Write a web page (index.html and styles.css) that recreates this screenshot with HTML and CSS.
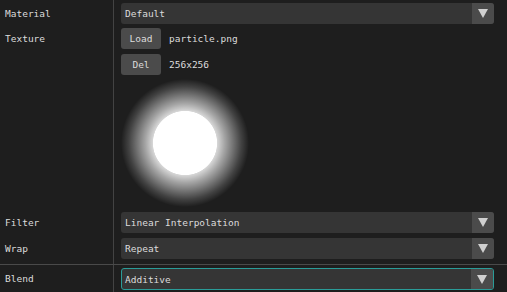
FILE: index.html
```html
<!DOCTYPE html>
<html>
<head>
<meta charset="utf-8">
<link rel="stylesheet" href="styles.css">
</head>
<body>
<div class="props">
  <div class="row row-material">
    <div class="label">Material</div>
    <div class="value">
      <div class="combo"><span class="combo-text">Default</span><span class="arrow"><span class="tri"></span></span></div>
    </div>
  </div>
  <div class="row row-texture">
    <div class="label">Texture</div>
    <div class="value">
      <div class="btn-line"><span class="btn">Load</span><span class="info">particle.png</span></div>
      <div class="btn-line btn-line-del"><span class="btn">Del</span><span class="info">256x256</span></div>
      <div class="preview"><div class="glow"></div></div>
    </div>
  </div>
  <div class="row row-gap5">
    <div class="label">Filter</div>
    <div class="value">
      <div class="combo"><span class="combo-text">Linear Interpolation</span><span class="arrow"><span class="tri"></span></span></div>
    </div>
  </div>
  <div class="row row-gap5">
    <div class="label">Wrap</div>
    <div class="value">
      <div class="combo"><span class="combo-text">Repeat</span><span class="arrow"><span class="tri"></span></span></div>
    </div>
  </div>
  <div class="sep"></div>
  <div class="row row-blend">
    <div class="label">Blend</div>
    <div class="value">
      <div class="combo combo-active"><span class="combo-text">Additive</span><span class="arrow"><span class="tri"></span></span></div>
    </div>
  </div>
</div>
</body>
</html>
```
FILE: styles.css
```css
html, body {
  margin: 0;
  padding: 0;
  background: #1e1e1e;
}
body {
  width: 507px;
  height: 292px;
  overflow: hidden;
  font-family: "DejaVu Sans Mono", monospace;
  font-size: 9.5px;
  color: #dcdcdc;
}
.props {
  height: 292px;
  background: linear-gradient(#434343, #434343) 113px 0 / 1px 100% no-repeat;
}
.row {
  display: flex;
  align-items: flex-start;
}
.label {
  width: 113px;
  height: 21px;
  flex: none;
  box-sizing: border-box;
  padding-left: 5px;
  line-height: 22px;
}
.value {
  flex: 1;
  padding-left: 8px;
  padding-right: 13px;
  min-width: 0;
}
.row-material { padding-top: 3px; }
.row-texture { padding-top: 4px; }
.row-gap5 { padding-top: 5px; }
.row-blend { padding-top: 3px; }

.combo {
  display: flex;
  height: 21px;
  background: #353535;
  border-radius: 3px;
  overflow: hidden;
  box-sizing: border-box;
}
.combo-active {
  height: 22px;
  border: 1px solid #2a9c98;
}
.combo-text {
  flex: 1;
  padding-left: 4px;
  line-height: 22px;
}
.combo-active .combo-text {
  padding-left: 3px;
  line-height: 21px;
}
.arrow {
  width: 22px;
  flex: none;
  background: #4b4b4b;
  display: flex;
  align-items: center;
  justify-content: center;
}
.tri {
  width: 0;
  height: 0;
  border-left: 5px solid transparent;
  border-right: 5px solid transparent;
  border-top: 9px solid #d0d0d0;
}
.btn-line {
  display: flex;
  align-items: center;
  gap: 8px;
  height: 21px;
}
.btn-line-del {
  margin-top: 5px;
}
.btn {
  width: 40px;
  height: 21px;
  line-height: 22px;
  text-align: center;
  background: #4b4b4b;
  border-radius: 3px;
}
.info {
  line-height: 22px;
}
.preview {
  margin-top: 4px;
  width: 128px;
  height: 128px;
}
.glow {
  width: 128px;
  height: 128px;
  border-radius: 50%;
  background: radial-gradient(circle closest-side,
    #ffffff 0%, #ffffff 49.5%,
    rgba(255,255,255,0.82) 50.5%,
    rgba(255,255,255,0.6) 62%,
    rgba(255,255,255,0.38) 75%,
    rgba(255,255,255,0.16) 88%,
    rgba(255,255,255,0) 100%);
}
.sep {
  height: 1px;
  margin-top: 5px;
  background: #4a4a4a;
}
```
